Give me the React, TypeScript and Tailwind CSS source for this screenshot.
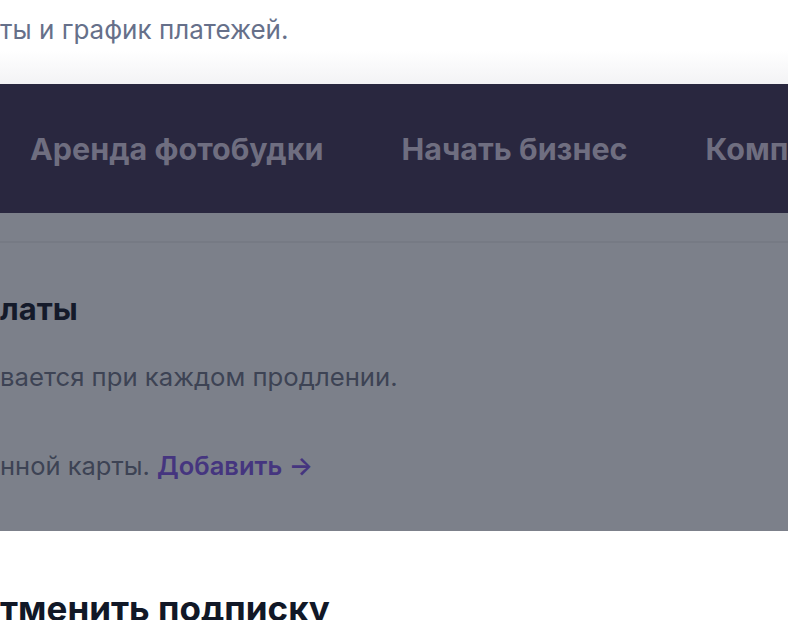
/* Страница подписки: меню поверх затемнённого блока способа оплаты */

const navItems = ["Аренда фотобудки", "Начать бизнес", "Компания"];

export default function App() {
  return (
    <div className="h-[620px] w-[788px] overflow-hidden bg-white font-['Inter',sans-serif]">
      {/* Хвост подзаголовка */}
      <div className="h-[84px] bg-gradient-to-b from-white from-60% to-[#f3f3f5] pt-[14px]">
        <p className="whitespace-nowrap text-[26px] leading-[32px] text-[#66708a]">
          ты и график платежей.
        </p>
      </div>

      {/* Меню */}
      <nav className="flex h-[129px] items-center gap-[78px] overflow-hidden whitespace-nowrap bg-[#29273f] pl-[30px] text-[30.5px] font-bold text-[#6f6e80]">
        {navItems.map((item) => (
          <span key={item} className="shrink-0">
            {item}
          </span>
        ))}
      </nav>

      {/* Затемнённый блок */}
      <section className="h-[318px] bg-[#7c808a] pt-[28px]">
        <div className="border-t-2 border-[#767a84] pt-[46px]">
          <h3 className="whitespace-nowrap text-[31px] font-bold leading-[40px] text-[#141a2a]">латы</h3>
          <p className="mt-[32px] whitespace-nowrap text-[25.7px] leading-[32px] text-[#3d4354]">
            вается при каждом продлении.
          </p>
          <p className="mt-[57px] whitespace-nowrap text-[25.5px] leading-[32px] text-[#3d4354]">
            нной карты.{" "}
            <span className="font-semibold text-[#45357f]">Добавить →</span>
          </p>
        </div>
      </section>

      {/* Отмена */}
      <h2 className="mt-[57px] whitespace-nowrap text-[35px] font-bold leading-[40px] text-[#111827]">
        тменить подписку
      </h2>
    </div>
  );
}
